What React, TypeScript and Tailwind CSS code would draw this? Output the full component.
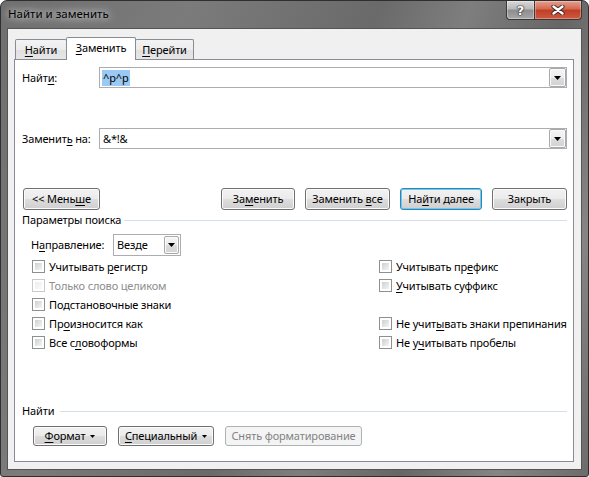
import React from "react";

const btnBase =
  "h-[22px] flex items-center justify-center rounded-[3px] border text-black whitespace-nowrap";
const btnNormal =
  "border-[#707070] bg-[linear-gradient(180deg,#f2f2f2_0%,#ebebeb_48%,#dddddd_52%,#cfcfcf_100%)] shadow-[inset_0_0_0_1px_#fbfbfb]";
const btnDefault =
  "border-[#3c7fb1] bg-[linear-gradient(180deg,#f2f2f2_0%,#ebebeb_48%,#dddddd_52%,#cfcfcf_100%)] shadow-[inset_0_0_0_1px_#5fd0f5]";

function U({ c }: { c: string }) {
  return <span className="underline decoration-1 underline-offset-[2px]">{c}</span>;
}

function DropBtn({ className }: { className?: string }) {
  return (
    <div
      className={
        "flex items-center justify-center rounded-[2px] border border-[#a8a8a8] bg-[linear-gradient(180deg,#f5f5f5_0%,#ededed_50%,#dddddd_50%,#d2d2d2_100%)] shadow-[inset_0_0_0_1px_#fbfbfb] " +
        (className ?? "")
      }
    >
      <svg width="7" height="4" viewBox="0 0 7 4">
        <path d="M0 0h7L3.5 4z" fill="#000" />
      </svg>
    </div>
  );
}

function Check({ label, disabled }: { label: React.ReactNode; disabled?: boolean }) {
  return (
    <div className="h-[19px] flex items-center gap-[4px] whitespace-nowrap">
      <div
        className={
          "w-[13px] h-[13px] border p-[2px] bg-white shrink-0 " +
          (disabled ? "border-[#cacaca]" : "border-[#8e8f8f]")
        }
      >
        <div
          className={
            "w-full h-full " +
            (disabled
              ? "bg-[linear-gradient(135deg,#ececec,#fbfbfb)]"
              : "bg-[linear-gradient(135deg,#cdcfd2,#f4f4f4)]")
          }
        />
      </div>
      <span className={disabled ? "text-[#8d8d8d]" : ""}>{label}</span>
    </div>
  );
}

export default function App() {
  return (
    <div className="w-[589px] h-[477px] font-['Noto_Sans',sans-serif] text-[11px] leading-[16px] tracking-[-0.15px] text-black">
      <div className="w-full h-full flex flex-col rounded-t-[7px] rounded-b-[3px] border border-[#2f2f2f] bg-[linear-gradient(110deg,#6f6f6f_0%,#7b7b7b_25%,#6a6a6a_50%,#7e7e7e_62%,#666666_75%,#858585_88%,#6c6c6c_100%)] overflow-hidden">
        {/* title bar */}
        <div className="h-[27px] flex items-start">
          <div className="pl-[7px] pt-[5px] text-[11.5px] leading-[16px] tracking-normal text-black whitespace-nowrap [text-shadow:0_0_6px_#d8d8d8,0_0_10px_#cfcfcf]">
            Найти и заменить
          </div>
          <div className="flex-1" />
          <div className="flex mr-[6px]">
            <div className="w-[29px] h-[19px] border border-t-0 border-[#383838] rounded-bl-[4px] bg-[linear-gradient(180deg,#d9d9d9_0%,#b8b8b8_45%,#8d8d8d_50%,#a7a7a7_100%)] shadow-[inset_0_0_0_1px_rgba(255,255,255,0.35)] flex items-center justify-center">
              <span className="font-['DejaVu_Sans',sans-serif] font-bold text-[13px] leading-[13px] text-white [text-shadow:0_0_1px_#222,0_0_1px_#222,0_0_2px_#333]">
                ?
              </span>
            </div>
            <div className="w-[47px] h-[19px] border border-t-0 border-l-0 border-[#383838] rounded-br-[4px] bg-[linear-gradient(180deg,#e6a090_0%,#d3684f_45%,#c03d25_50%,#cf5a40_100%)] shadow-[inset_0_0_0_1px_rgba(255,255,255,0.3)] flex items-center justify-center">
              <svg width="14" height="10" viewBox="0 0 14 10">
                <path d="M2.5 1.5L11.5 8.5M11.5 1.5L2.5 8.5" stroke="#3b2a28" strokeWidth="4.2" strokeLinecap="round" />
                <path d="M2.5 1.5L11.5 8.5M11.5 1.5L2.5 8.5" stroke="#ffffff" strokeWidth="2.4" strokeLinecap="round" />
              </svg>
            </div>
          </div>
        </div>

        {/* client area */}
        <div className="flex-1 mx-[6px] mb-[6px] border border-[#555555] bg-[#f0f0f0] flex flex-col pt-[8px] pl-[6px] pr-[7px] pb-[7px]">
          {/* tabs */}
          <div className="h-[22px] flex items-end pl-[1px] relative z-10 whitespace-nowrap">
            <div className="w-[52px] h-[20px] border border-b-0 border-[#898c95] rounded-t-[2px] bg-[linear-gradient(180deg,#f3f3f3_0%,#ececec_50%,#e0e0e0_50%,#e6e6e6_100%)] flex items-center justify-center">
              <span>
                <U c="Н" />айти
              </span>
            </div>
            <div className="w-[70px] h-[23px] -mb-px -ml-px border border-b-0 border-[#898c95] rounded-t-[2px] bg-white flex items-start justify-center pt-[2px]">
              <span>
                <U c="З" />аменить
              </span>
            </div>
            <div className="w-[59px] h-[20px] -ml-px border border-b-0 border-[#898c95] rounded-t-[2px] bg-[linear-gradient(180deg,#f3f3f3_0%,#ececec_50%,#e0e0e0_50%,#e6e6e6_100%)] flex items-center justify-center">
              <span>
                <U c="П" />ерейти
              </span>
            </div>
          </div>

          {/* panel */}
          <div className="flex-1 border border-[#898c95] bg-white flex flex-col pl-[7px] pr-[6px] whitespace-nowrap">
            {/* find */}
            <div className="mt-[7px] h-[21px] flex items-center">
              <div className="w-[77px]">
                Найт<U c="и" />:
              </div>
              <div className="flex-1 h-[21px] border border-[#abadb3] bg-white flex items-center">
                <div className="flex-1 pl-[2px] flex items-center">
                  <span className="bg-[#99c9f4] px-px">^p^p</span>
                </div>
                <DropBtn className="w-[17px] h-[19px]" />
              </div>
            </div>

            {/* replace */}
            <div className="mt-[40px] h-[21px] flex items-center">
              <div className="w-[77px]">
                Заменит<U c="ь" /> на:
              </div>
              <div className="flex-1 h-[21px] border border-[#abadb3] bg-white flex items-center">
                <div className="flex-1 pl-[3px]">&amp;*!&amp;</div>
                <DropBtn className="w-[17px] h-[19px]" />
              </div>
            </div>

            {/* buttons */}
            <div className="mt-[39px] h-[22px] flex items-center justify-between">
              <div className={`${btnBase} ${btnNormal} ml-px w-[77px]`}>
                <span>
                  &lt;&lt; Мень<U c="ш" />е
                </span>
              </div>
              <div className="flex gap-[10px]">
                <div className={`${btnBase} ${btnNormal} w-[74px]`}>
                  <span>
                    За<U c="м" />енить
                  </span>
                </div>
                <div className={`${btnBase} ${btnNormal} w-[85px]`}>
                  <span>
                    Заменить <U c="в" />се
                  </span>
                </div>
                <div className={`${btnBase} ${btnDefault} w-[82px]`}>
                  <span>
                    На<U c="й" />ти далее
                  </span>
                </div>
                <div className={`${btnBase} ${btnNormal} w-[75px]`}>
                  <span>Закрыть</span>
                </div>
              </div>
            </div>

            {/* search params header */}
            <div className="mt-[2px] h-[16px] flex items-center gap-[3px]">
              <span>Параметры поиска</span>
              <div className="flex-1 h-px bg-[#d5dfe5]" />
            </div>

            {/* direction */}
            <div className="mt-[6px] h-[22px] flex items-center pl-[9px]">
              <div className="w-[82px]">
                Н<U c="а" />правление:
              </div>
              <div className="w-[68px] h-[22px] border border-[#abadb3] bg-white flex items-center p-px">
                <div className="flex-1 pl-[2px]">Везде</div>
                <DropBtn className="w-[15px] h-[18px]" />
              </div>
            </div>

            {/* checkboxes */}
            <div className="mt-[1px] grid grid-cols-[347px_1fr] pl-[10px]">
              <Check
                label={
                  <>
                    Учитывать <U c="р" />егистр
                  </>
                }
              />
              <Check
                label={
                  <>
                    Учитывать пр<U c="е" />фикс
                  </>
                }
              />
              <Check label="Только слово целиком" disabled />
              <Check
                label={
                  <>
                    <U c="У" />читывать суффикс
                  </>
                }
              />
              <Check label="Подстановочные знаки" />
              <div className="h-[19px]" />
              <Check
                label={
                  <>
                    Пр<U c="о" />износится как
                  </>
                }
              />
              <Check
                label={
                  <>
                    Не учит<U c="ы" />вать знаки препинания
                  </>
                }
              />
              <Check
                label={
                  <>
                    Все с<U c="л" />овоформы
                  </>
                }
              />
              <Check
                label={
                  <>
                    Не у<U c="ч" />итывать пробелы
                  </>
                }
              />
            </div>

            {/* find section */}
            <div className="mt-[51px] h-[16px] flex items-center gap-[6px]">
              <span>Найти</span>
              <div className="flex-1 h-px bg-[#d5dfe5]" />
            </div>

            <div className="mt-[7px] flex gap-[11px] pl-[11px]">
              <div className={`${btnBase} ${btnNormal} !h-[20px] w-[74px] gap-[5px]`}>
                <span>
                  <U c="Ф" />ормат
                </span>
                <svg width="5" height="3" viewBox="0 0 5 3">
                  <path d="M0 0h5L2.5 3z" fill="#000" />
                </svg>
              </div>
              <div className={`${btnBase} ${btnNormal} !h-[20px] w-[96px] gap-[5px]`}>
                <span>
                  <U c="С" />пециальный
                </span>
                <svg width="5" height="3" viewBox="0 0 5 3">
                  <path d="M0 0h5L2.5 3z" fill="#000" />
                </svg>
              </div>
              <div className="h-[20px] w-[137px] flex items-center justify-center rounded-[3px] border border-[#adb2b5] bg-[#f4f4f4] text-[#838383] whitespace-nowrap">
                Снять форматирование
              </div>
            </div>
          </div>
        </div>
      </div>
    </div>
  );
}
